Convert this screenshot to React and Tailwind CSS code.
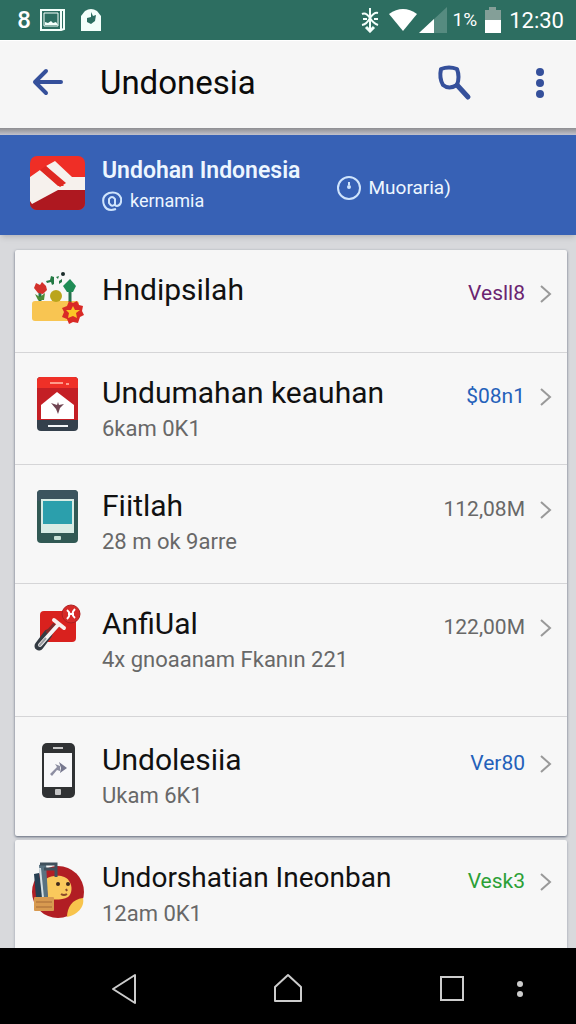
import React from 'react';

const FlowerBoxIcon = () => (
  <svg viewBox="0 0 56 56" className="w-14 h-14 overflow-visible" aria-hidden="true">
    <rect x="2" y="29" width="47" height="20" rx="3" fill="#f8c552" />
    <path d="M10 20v9M40 16v14" stroke="#26734d" strokeWidth="3" />
    <path d="M6 11l4 2 2-3 4 4 1 4-4 4-5-1-4-5z" fill="#d3322b" />
    <path d="M5 22l5 3 5-4-1 7H8z" fill="#4c8b35" />
    <circle cx="26" cy="24" r="6" fill="#bba51d" />
    <path d="M40 7l6 7-3 6h-6l-4-6z" fill="#1f8c55" />
    <path d="M21 4l3 1v7l-2 1-1-3-4 1-1-2 4-1zM29 9l3-2v3l-3 2zM26 5l3-1-1 3z" fill="#247a45" />
    <circle cx="33" cy="2" r="2" fill="#1b2c2a" />
    <path d="M39 29l4 2 4-2 2 4 4 1-1 5 2 4-4 2-2 6-5-1-4 2-2-5-5-2 2-5-2-4 5-2z" fill="#d92a26" />
    <path d="M43 34l2 4h5l-4 3 1 5-4-2-5 2 1-5-3-3h5z" fill="#fbc426" />
  </svg>
);

const HomeAppIcon = () => (
  <svg viewBox="0 0 56 56" className="w-14 h-14" aria-hidden="true">
    <rect x="7" y="2" width="41" height="54" rx="4" fill="#34404c" />
    <path d="M7 6a4 4 0 0 1 4-4h33a4 4 0 0 1 4 4v39H7z" fill="#c41f25" />
    <path d="M7 6a4 4 0 0 1 4-4h33a4 4 0 0 1 4 4v7H7z" fill="#ef3027" />
    <path d="M20 8h13M36 9h3" stroke="#ff9b8a" strokeWidth="2" />
    <path d="M27 17l17 13v14H11V30z" fill="#fff" />
    <path d="M21 28l6 2 1-3 1 3 5-1-4 4-2 6-2-5z" fill="#704552" />
    <path d="M18 51h20" stroke="#f3f6f8" strokeWidth="2" />
  </svg>
);

const TabletIcon = () => (
  <svg viewBox="0 0 56 56" className="w-14 h-14" aria-hidden="true">
    <rect x="7" y="2" width="41" height="53" rx="4" fill="#315954" />
    <path d="M7 6a4 4 0 0 1 4-4h33a4 4 0 0 1 4 4v7H7z" fill="#3b545e" />
    <rect x="11" y="11" width="33" height="34" fill="#d9ece5" />
    <rect x="13" y="13" width="29" height="23" fill="#2b9fac" />
    <rect x="24" y="48" width="7" height="4" rx="1" fill="#c9e2d7" />
  </svg>
);

const ToolIcon = () => (
  <svg viewBox="0 0 56 56" className="w-14 h-14 overflow-visible" aria-hidden="true">
    <rect x="10" y="5" width="36" height="31" rx="4" fill="#d9211e" />
    <circle cx="41" cy="8" r="9" fill="#d62a28" stroke="#ad1f20" />
    <path d="M37 4q5 4 0 9M45 3q-5 5 0 9M38 8h6" stroke="#fff" strokeWidth="2" fill="none" />
    <path d="M9 40l9-12" stroke="#333b43" strokeWidth="9" strokeLinecap="round" />
    <path d="M18 28l8-9" stroke="#7d2a2c" strokeWidth="7" />
    <path d="M10 39l18-20" stroke="#f5f3f3" strokeWidth="4" strokeLinecap="round" />
    <path d="M24 14l10 8" stroke="#f8eeec" strokeWidth="4" strokeLinecap="round" />
    <path d="M9 40l7-8" stroke="#9b9da2" strokeWidth="2" />
  </svg>
);

const PhoneIcon = () => (
  <svg viewBox="0 0 56 56" className="w-14 h-14" aria-hidden="true">
    <rect x="12" y="1" width="33" height="55" rx="5" fill="#303234" />
    <rect x="14" y="11" width="28" height="34" fill="#f8f8fa" />
    <path d="M23 6h10" stroke="#c7c7c7" strokeWidth="2" />
    <rect x="25" y="47" width="6" height="6" rx="1" fill="#c4c4c5" />
    <path d="M20 32l7-7-2-3 5 2v5l-3-1-5 6z" fill="#8d8ea2" />
    <path d="M29 20l8 6-7 5 1-5z" fill="#77788f" />
  </svg>
);

const AvatarIcon = () => (
  <svg viewBox="0 0 56 60" className="w-14 h-15" aria-hidden="true">
    <circle cx="28" cy="32" r="26" fill="#b11e24" />
    <path d="M53 38c2 9-6 17-16 19 0-9 5-18 16-19z" fill="#f8c44c" />
    <path d="M16 19c6-4 19-5 23 2 4 5 3 13-1 16-5 3-14 3-20 2z" fill="#fac95c" />
    <path d="M9 5l7-2 2 34-7 1z" fill="#597281" />
    <path d="M4 14l5-1 4 26-7-2z" fill="#263f52" />
    <path d="M10 8l3 30" stroke="#d5e0e4" strokeWidth="2" />
    <path d="M10 4h16v13M14 9h12" stroke="#40515d" strokeWidth="3" fill="none" />
    <rect x="4" y="37" width="20" height="14" rx="1" fill="#d89a50" />
    <path d="M6 42h16M6 47h16" stroke="#a66b36" />
    <circle cx="28" cy="24" r="2" fill="#3f291c" />
    <circle cx="38" cy="24" r="2" fill="#3f291c" />
    <path d="M31 34q3 2 6 0M36 29l1 2" stroke="#8b4a2b" strokeWidth="2" fill="none" />
  </svg>
);

const apps = [
  { title: 'Hndipsilah', meta: 'Vesll8', color: 'text-[#6b2470]', icon: FlowerBoxIcon, pad: 'pt-[22px] pb-6' },
  { title: 'Undumahan keauhan', sub: '6kam 0K1', meta: '$08n1', color: 'text-[#2461ba]', icon: HomeAppIcon, pad: 'pt-[22px] pb-[17px]' },
  { title: 'Fiitlah', sub: '28 m ok 9arre', meta: '112,08M', color: 'text-[#686868]', icon: TabletIcon, pad: 'py-[23px]' },
  { title: 'AnfiUal', sub: '4x gnoaanam Fkanın 221', meta: '122,00M', color: 'text-[#686868]', icon: ToolIcon, pad: 'pt-[22px] pb-[38px]' },
  { title: 'Undolesiia', sub: 'Ukam 6K1', meta: 'Ver80', color: 'text-[#2461ba]', icon: PhoneIcon, pad: 'pt-[25px] pb-[22px]' },
];

const lastApp = { title: 'Undorshatian Ineonban', sub: '12am 0K1', meta: 'Vesk3', color: 'text-[#2ba036]', icon: AvatarIcon, pad: 'pt-5 pb-4', size: 'text-[28px]' };

const AppRow = ({ app }) => {
  const Icon = app.icon;
  return (
    <li>
      <button type="button" className={`flex w-full items-start pl-[15px] pr-3 text-left ${app.pad}`}>
        <Icon />
        <span className="ml-4 min-w-0 flex-1">
          <span className={`block truncate leading-9 text-[#111] ${app.size || 'text-[30px]'}`}>{app.title}</span>
          {app.sub && <span className="block truncate text-[22px] leading-9 text-[#686868]">{app.sub}</span>}
        </span>
        <span className="mt-1 flex h-9 shrink-0 items-center gap-3">
          <span className={`text-[21px] ${app.color}`}>{app.meta}</span>
          <svg viewBox="0 0 18 24" className="h-6 w-[18px]" fill="none" stroke="#999" strokeWidth="2" aria-hidden="true">
            <path d="M4 4l9 8-9 8" />
          </svg>
        </span>
      </button>
    </li>
  );
};

const StatusBar = () => (
  <div className="flex h-10 items-center bg-[#2d6e61] pl-4 pr-3 text-white">
    <span className="w-4 text-center text-[24px] font-medium">8</span>
    <svg viewBox="0 0 26 24" className="ml-2 h-6 w-[26px]" fill="none" stroke="#f4fffb" strokeWidth="2" aria-hidden="true">
      <path d="M1 2h20v20H1zM21 2h3v19l-3 1" />
      <path d="M4 5h14v13H4z" strokeWidth="1" />
      <path d="M5 17v-3l3 1 3-2 2 2 3-1 2 3z" fill="#f4fffb" stroke="none" />
    </svg>
    <svg viewBox="0 0 22 24" className="ml-3.5 h-6 w-[22px]" aria-hidden="true">
      <path d="M1 23V8l4-5q6-4 12 0l4 5v15z" fill="#f4fffb" />
      <path d="M11 4l2 4 3-1-1 6-4 3-4-2v-4l4-1z" fill="#2d6e61" />
    </svg>
    <div className="ml-auto flex items-center">
      <svg viewBox="0 0 18 26" className="h-[26px] w-[18px]" fill="none" stroke="#f4fffb" strokeWidth="2" aria-hidden="true">
        <path d="M9 1v23M1 7q4-2 8 4 3 5 8 7M2 12h4M17 6q-4-1-8 5-3 6-8 7M17 12h-4" />
        <path d="M5 20l4 4 4-4" strokeWidth="3" />
      </svg>
      <svg viewBox="0 0 28 24" className="ml-2.5 h-6 w-7" aria-hidden="true">
        <path d="M0 6Q14-4 28 6L14 23z" fill="#fff" />
      </svg>
      <svg viewBox="0 0 28 26" className="ml-0.5 h-[26px] w-7" aria-hidden="true">
        <path d="M0 26L28 0v26z" fill="#568b80" />
        <path d="M0 26l15-14v14z" fill="#fff" />
      </svg>
      <span className="ml-1.5 text-[19px]">1%</span>
      <svg viewBox="0 0 16 26" className="ml-2 h-[26px] w-4" aria-hidden="true">
        <path d="M0 3h4V0h7v3h5v23H0z" fill="#849f98" />
        <path d="M0 13h16v13H0z" fill="#fff" />
      </svg>
      <span className="ml-2 text-[22px]">12:30</span>
    </div>
  </div>
);

const App = () => (
  <div className="flex min-h-screen flex-col bg-[#d8d9dc] font-[Roboto,sans-serif]">
    <StatusBar />
    <header className="flex h-[88px] items-center border-t border-white bg-[#f6f6f6] pl-7 pr-5 pb-1">
      <button type="button" aria-label="Back" className="flex h-11 w-11 items-center">
        <svg viewBox="0 0 40 32" className="h-8 w-10" fill="none" stroke="#35509b" strokeWidth="4" strokeLinecap="round" strokeLinejoin="round" aria-hidden="true">
          <path d="M33 15H7M18 4L7 15l11 11" />
        </svg>
      </button>
      <h1 className="ml-7 text-[33px] leading-10 text-[#0b0b0b]">Undonesia</h1>
      <button type="button" aria-label="Search" className="ml-auto">
        <svg viewBox="0 0 36 40" className="h-10 w-9" fill="none" stroke="#35509b" aria-hidden="true">
          <path d="M5 6q8-3 16 0 3 8 0 16-8 5-14 0-4-7-2-16z" strokeWidth="4" strokeLinejoin="round" />
          <path d="M21 22l11 12" strokeWidth="5" strokeLinecap="round" />
        </svg>
      </button>
      <button type="button" aria-label="More options" className="ml-[52px]">
        <svg viewBox="0 0 32 32" className="h-8 w-8" fill="#35509b" aria-hidden="true">
          <circle cx="16" cy="5" r="4" />
          <circle cx="16" cy="16" r="4" />
          <circle cx="16" cy="27" r="4" />
        </svg>
      </button>
    </header>
    <div className="h-[7px] bg-gradient-to-b from-[#8e8e91] to-[#c3c3cd]" />

    <section className="flex h-[100px] items-start bg-[#3761b5] pl-7 pt-5 text-[#edf6ff] shadow-md">
      <svg viewBox="0 0 58 58" className="h-[58px] w-[58px]" aria-hidden="true">
        <rect x="2" y="1" width="55" height="54" rx="7" fill="#ef2e26" />
        <path d="M2 34h55v14a7 7 0 0 1-7 7H9a7 7 0 0 1-7-7z" fill="#ae1820" />
        <path d="M2 22l10-7 18 16h6L18 11l9-5 17 16h13v13H30L4 49l-2-3z" fill="#f6f1ed" />
        <path d="M12 15l6-4 20 17-6 4z" fill="#df2922" />
      </svg>
      <div className="ml-4">
        <h2 className="text-[23px] leading-8 font-semibold">Undohan Indonesia</h2>
        <p className="flex items-center gap-2 text-[18px] leading-7">
          <svg viewBox="0 0 20 20" className="h-5 w-5" fill="none" stroke="#cfe4fc" strokeWidth="2" aria-hidden="true">
            <path d="M14 18q-9 3-12-4-3-9 5-12 9-2 12 5 1 7-4 8-2 0-2-2V8q-3-4-6 0v4q3 5 6 1" />
          </svg>
          kernamia
        </p>
      </div>
      <p className="ml-9 mt-5 flex items-center gap-1.5 text-[19px] leading-6">
        <svg viewBox="0 0 26 26" className="h-[26px] w-[26px]" fill="none" stroke="#cfe4fc" strokeWidth="2" aria-hidden="true">
          <circle cx="13" cy="13" r="11" />
          <path d="M13 7v3" />
          <circle cx="13" cy="12" r="1" />
        </svg>
        Muoraria)
      </p>
    </section>

    <main className="flex flex-1 flex-col gap-1 pl-[15px] pr-[9px] pt-[15px]">
      <ul className="divide-y divide-[#d5d5d7] rounded-xs bg-[#f7f7f7] shadow-sm shadow-gray-500">
        {apps.map(app => <AppRow key={app.title} app={app} />)}
      </ul>
      <ul className="flex-1 rounded-t-xs bg-[#f7f7f7] shadow-sm shadow-gray-400">
        <AppRow app={lastApp} />
      </ul>
    </main>

    <nav className="relative flex h-[77px] items-center justify-between bg-black px-[104px] pt-1" aria-label="System navigation">
      <button type="button" aria-label="Back">
        <svg viewBox="0 0 40 40" className="h-10 w-10" fill="none" stroke="#ccc" strokeWidth="2" strokeLinejoin="round" aria-hidden="true">
          <path d="M9 20L31 6v28z" />
        </svg>
      </button>
      <button type="button" aria-label="Home">
        <svg viewBox="0 0 40 40" className="h-10 w-10" fill="none" stroke="#ccc" strokeWidth="2" strokeLinejoin="round" aria-hidden="true">
          <path d="M20 6l13 12v14H7V18z" />
        </svg>
      </button>
      <button type="button" aria-label="Recent apps">
        <svg viewBox="0 0 40 40" className="h-10 w-10" fill="none" stroke="#ccc" strokeWidth="2" aria-hidden="true">
          <path d="M9 8h22v23H9z" />
        </svg>
      </button>
      <button type="button" aria-label="Menu" className="absolute right-[46px]">
        <svg viewBox="0 0 20 24" className="h-6 w-5" fill="#ccc" aria-hidden="true">
          <circle cx="10" cy="7" r="3" />
          <circle cx="10" cy="17" r="3" />
        </svg>
      </button>
    </nav>
  </div>
);

export default App;
